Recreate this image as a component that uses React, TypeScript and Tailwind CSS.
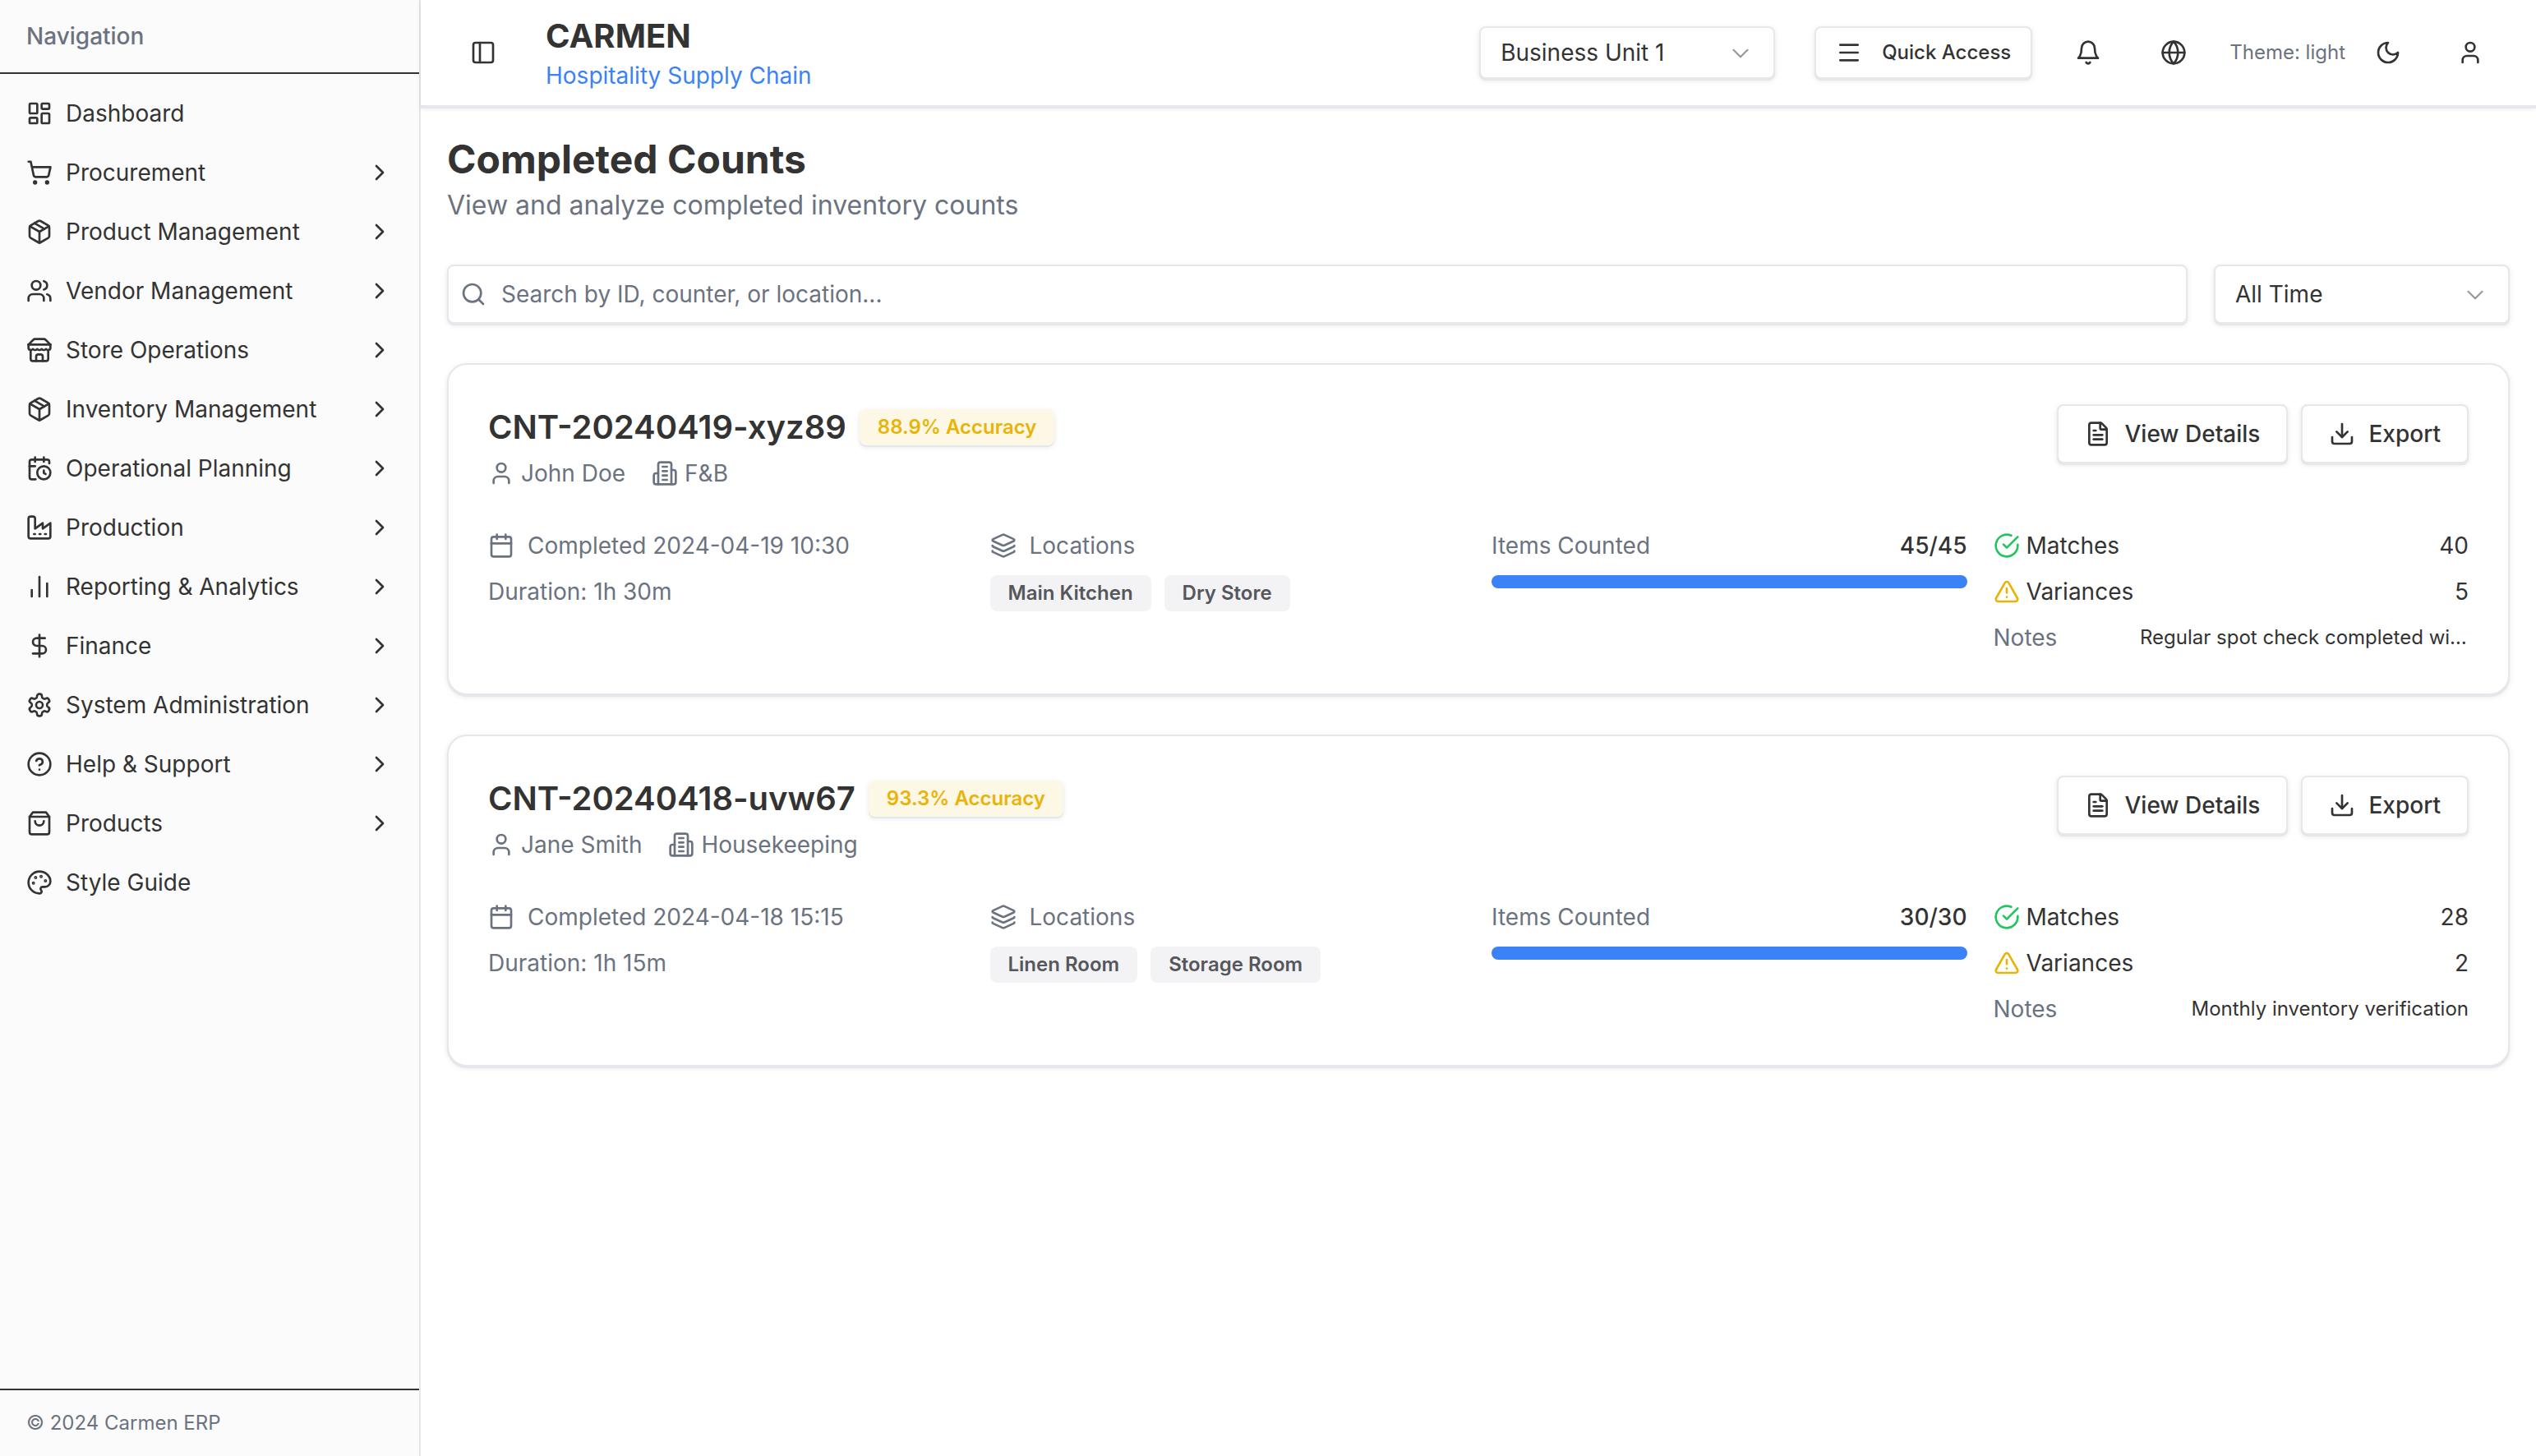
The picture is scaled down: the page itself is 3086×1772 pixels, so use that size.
import type { ComponentType, ReactNode, SVGProps } from "react";
import {
  Calendar,
  CalendarClock,
  ChartNoAxesColumn,
  ChevronRight,
  CircleQuestionMark,
  DollarSign,
  FileText,
  Globe,
  Layers,
  LayoutDashboard,
  Menu,
  Palette,
  Package,
  Search,
  ShoppingCart,
  User,
  Users,
} from "lucide-react";

type IconType = ComponentType<{ className?: string }>;

function Stroke({ children, ...rest }: SVGProps<SVGSVGElement> & { children: ReactNode }) {
  return (
    <svg
      viewBox="0 0 24 24"
      fill="none"
      stroke="currentColor"
      strokeWidth={2}
      strokeLinecap="round"
      strokeLinejoin="round"
      aria-hidden="true"
      {...rest}
    >
      {children}
    </svg>
  );
}

const BellIcon: IconType = ({ className }) => (
  <Stroke className={className}>
    <path d="M6 8a6 6 0 0 1 12 0c0 7 3 9 3 9H3s3-2 3-9" />
    <path d="M10.3 21a1.94 1.94 0 0 0 3.4 0" />
  </Stroke>
);

const MoonIcon: IconType = ({ className }) => (
  <Stroke className={className}>
    <path d="M12 3a6 6 0 0 0 9 9 9 9 0 1 1-9-9Z" />
  </Stroke>
);

const PanelIcon: IconType = ({ className }) => (
  <Stroke className={className}>
    <rect width="18" height="18" x="3" y="3" rx="2" />
    <path d="M9 3v18" />
  </Stroke>
);

const BuildingIcon: IconType = ({ className }) => (
  <Stroke className={className}>
    <path d="M6 22V4a2 2 0 0 1 2-2h8a2 2 0 0 1 2 2v18Z" />
    <path d="M6 12H4a2 2 0 0 0-2 2v6a2 2 0 0 0 2 2h2" />
    <path d="M18 9h2a2 2 0 0 1 2 2v9a2 2 0 0 1-2 2h-2" />
    <path d="M10 6h4M10 10h4M10 14h4M10 18h4" />
  </Stroke>
);

const FactoryIcon: IconType = ({ className }) => (
  <Stroke className={className}>
    <path d="M2 20a2 2 0 0 0 2 2h16a2 2 0 0 0 2-2V8l-7 5V8l-7 5V4a2 2 0 0 0-2-2H4a2 2 0 0 0-2 2Z" />
    <path d="M17 18h1M12 18h1M7 18h1" />
  </Stroke>
);

const StoreIcon: IconType = ({ className }) => (
  <Stroke className={className}>
    <path d="m2 7 4.41-4.41A2 2 0 0 1 7.83 2h8.34a2 2 0 0 1 1.42.59L22 7" />
    <path d="M4 12v8a2 2 0 0 0 2 2h12a2 2 0 0 0 2-2v-8" />
    <path d="M15 22v-4a2 2 0 0 0-2-2h-2a2 2 0 0 0-2 2v4" />
    <path d="M2 7h20" />
    <path d="M22 7v3a2 2 0 0 1-2 2a2.7 2.7 0 0 1-1.59-.63.7.7 0 0 0-.82 0A2.7 2.7 0 0 1 16 12a2.7 2.7 0 0 1-1.59-.63.7.7 0 0 0-.82 0A2.7 2.7 0 0 1 12 12a2.7 2.7 0 0 1-1.59-.63.7.7 0 0 0-.82 0A2.7 2.7 0 0 1 8 12a2.7 2.7 0 0 1-1.59-.63.7.7 0 0 0-.82 0A2.7 2.7 0 0 1 4 12a2 2 0 0 1-2-2V7" />
  </Stroke>
);

const GearIcon: IconType = ({ className }) => (
  <Stroke className={className}>
    <path d="M12.22 2h-.44a2 2 0 0 0-2 2v.18a2 2 0 0 1-1 1.73l-.43.25a2 2 0 0 1-2 0l-.15-.08a2 2 0 0 0-2.73.73l-.22.38a2 2 0 0 0 .73 2.73l.15.1a2 2 0 0 1 1 1.72v.51a2 2 0 0 1-1 1.74l-.15.09a2 2 0 0 0-.73 2.73l.22.38a2 2 0 0 0 2.73.73l.15-.08a2 2 0 0 1 2 0l.43.25a2 2 0 0 1 1 1.73V20a2 2 0 0 0 2 2h.44a2 2 0 0 0 2-2v-.18a2 2 0 0 1 1-1.73l.43-.25a2 2 0 0 1 2 0l.15.08a2 2 0 0 0 2.73-.73l.22-.39a2 2 0 0 0-.73-2.73l-.15-.08a2 2 0 0 1-1-1.74v-.5a2 2 0 0 1 1-1.74l.15-.09a2 2 0 0 0 .73-2.73l-.22-.38a2 2 0 0 0-2.73-.73l-.15.08a2 2 0 0 1-2 0l-.43-.25a2 2 0 0 1-1-1.73V4a2 2 0 0 0-2-2z" />
    <circle cx="12" cy="12" r="3" />
  </Stroke>
);

const BagIcon: IconType = ({ className }) => (
  <Stroke className={className}>
    <path d="M6 2 3 6v14a2 2 0 0 0 2 2h14a2 2 0 0 0 2-2V6l-3-4Z" />
    <path d="M3 6h18" />
    <path d="M16 10a4 4 0 0 1-8 0" />
  </Stroke>
);

const DownloadIcon: IconType = ({ className }) => (
  <Stroke className={className}>
    <path d="M21 15v4a2 2 0 0 1-2 2H5a2 2 0 0 1-2-2v-4" />
    <path d="m7 10 5 5 5-5" />
    <path d="M12 15V3" />
  </Stroke>
);

const CheckIcon: IconType = ({ className }) => (
  <Stroke className={className}>
    <path d="M22 11.08V12a10 10 0 1 1-5.93-9.14" />
    <path d="m9 11 3 3L22 4" />
  </Stroke>
);

const WarningIcon: IconType = ({ className }) => (
  <Stroke className={className}>
    <path d="m21.73 18-8-14a2 2 0 0 0-3.48 0l-8 14A2 2 0 0 0 4 21h16a2 2 0 0 0 1.73-3Z" />
    <path d="M12 9v4M12 17h.01" />
  </Stroke>
);

const NAV: { label: string; icon: IconType; leaf?: boolean }[] = [
  { label: "Dashboard", icon: LayoutDashboard, leaf: true },
  { label: "Procurement", icon: ShoppingCart },
  { label: "Product Management", icon: Package },
  { label: "Vendor Management", icon: Users },
  { label: "Store Operations", icon: StoreIcon },
  { label: "Inventory Management", icon: Package },
  { label: "Operational Planning", icon: CalendarClock },
  { label: "Production", icon: FactoryIcon },
  { label: "Reporting & Analytics", icon: ChartNoAxesColumn },
  { label: "Finance", icon: DollarSign },
  { label: "System Administration", icon: GearIcon },
  { label: "Help & Support", icon: CircleQuestionMark },
  { label: "Products", icon: BagIcon },
  { label: "Style Guide", icon: Palette, leaf: true },
];

type Count = {
  id: string;
  accuracy: string;
  counter: string;
  department: string;
  completed: string;
  duration: string;
  locations: string[];
  counted: number;
  total: number;
  matches: number;
  variances: number;
  notes: string;
};

const COUNTS: Count[] = [
  {
    id: "CNT-20240419-xyz89",
    accuracy: "88.9% Accuracy",
    counter: "John Doe",
    department: "F&B",
    completed: "2024-04-19 10:30",
    duration: "1h 30m",
    locations: ["Main Kitchen", "Dry Store"],
    counted: 45,
    total: 45,
    matches: 40,
    variances: 5,
    notes: "Regular spot check completed with minor variances",
  },
  {
    id: "CNT-20240418-uvw67",
    accuracy: "93.3% Accuracy",
    counter: "Jane Smith",
    department: "Housekeeping",
    completed: "2024-04-18 15:15",
    duration: "1h 15m",
    locations: ["Linen Room", "Storage Room"],
    counted: 30,
    total: 30,
    matches: 28,
    variances: 2,
    notes: "Monthly inventory verification",
  },
];

function Dropdown({ label, options, className }: { label: string; options: string[]; className: string }) {
  return (
    <div className={`relative w-[360px] shrink-0 ${className}`}>
      <select
        aria-label={label}
        className="h-full w-full appearance-none rounded-lg border-2 border-gray-200 bg-white px-6 text-[28px] leading-10 shadow-[0_2px_0_#e5e7eb,0_2px_6px_rgba(0,0,0,0.1)]"
      >
        {options.map((o) => (
          <option key={o}>{o}</option>
        ))}
      </select>
      <svg
        viewBox="0 0 15 15"
        className="pointer-events-none absolute inset-y-0 right-[26px] my-auto size-8 text-[#333] opacity-50"
        fill="none"
        stroke="currentColor"
        strokeLinecap="round"
        strokeLinejoin="round"
        aria-hidden="true"
      >
        <path d="m3.5 6 4 4 4-4" />
      </svg>
    </div>
  );
}

function Sidebar() {
  return (
    <aside className="flex w-[512px] shrink-0 flex-col border-r-2 border-gray-200 bg-[#fbfbfb]">
      <div className="border-b-2 border-[#333] px-8 py-6 text-[28px] leading-10 font-medium text-[#6b7280]">
        Navigation
      </div>
      <nav className="flex-1 pt-3" aria-label="Main">
        <ul>
          {NAV.map(({ label, icon: Icon, leaf }) => (
            <li key={label}>
              <a href="#" className="flex h-[72px] items-center gap-4 px-8 text-[28px] leading-10">
                <Icon className="size-8 shrink-0" />
                <span className="flex-1">{label}</span>
                {!leaf && <ChevronRight className="size-8 shrink-0" />}
              </a>
            </li>
          ))}
        </ul>
      </nav>
      <div className="border-t-2 border-[#333] px-8 py-6 text-2xl leading-8 text-[#6b7280]">© 2024 Carmen ERP</div>
    </aside>
  );
}

function IconButton({ label, icon: Icon, className }: { label: string; icon: IconType; className: string }) {
  return (
    <button type="button" aria-label={label} className={`flex items-center justify-center ${className}`}>
      <Icon className="size-8" />
    </button>
  );
}

function TopBar() {
  return (
    <header className="flex items-center justify-between border-b-2 border-gray-200 bg-white px-12 py-4 shadow-[0_2px_0_#e5e7eb,0_2px_6px_rgba(0,0,0,0.1)]">
      <div className="flex items-center gap-12">
        <IconButton label="Toggle sidebar" icon={PanelIcon} className="size-14" />
        <div>
          <div className="text-[40px] leading-14 font-bold">CARMEN</div>
          <div className="text-[28px] leading-10 text-[#3b82f6]">Hospitality Supply Chain</div>
        </div>
      </div>
      <div className="flex items-center">
        <Dropdown label="Business unit" options={["Business Unit 1"]} className="h-16" />
        <button
          type="button"
          className="ml-12 flex h-16 items-center gap-6 rounded-lg border-2 border-gray-200 bg-white px-6 text-2xl leading-8 font-medium shadow-[0_2px_0_#e5e7eb,0_2px_6px_rgba(0,0,0,0.1)]"
        >
          <Menu className="size-8" />
          Quick Access
        </button>
        <div className="ml-8 flex items-center gap-8">
          <IconButton label="Notifications" icon={BellIcon} className="size-[72px]" />
          <IconButton label="Language" icon={Globe} className="size-[72px]" />
          <div className="flex items-center gap-4">
            <span className="text-2xl leading-8 text-[#6b7280]">Theme: light</span>
            <IconButton label="Switch theme" icon={MoonIcon} className="size-[72px]" />
          </div>
          <IconButton label="Account" icon={User} className="size-16" />
        </div>
      </div>
    </header>
  );
}

function ActionButton({ icon: Icon, children }: { icon: IconType; children: ReactNode }) {
  return (
    <button
      type="button"
      className="flex h-[72px] items-center gap-4 rounded-lg border-2 border-gray-200 bg-white px-8 text-[28px] leading-10 font-medium shadow-[0_2px_0_#e5e7eb,0_2px_6px_rgba(0,0,0,0.1)]"
    >
      <Icon className="size-8" />
      {children}
    </button>
  );
}

function CountCard({ count }: { count: Count }) {
  return (
    <article className="rounded-3xl border-2 border-gray-200 bg-white p-12 shadow-[0_2px_0_#e5e7eb,0_2px_6px_rgba(0,0,0,0.1)]">
      <div className="flex items-start justify-between">
        <div className="flex flex-col gap-2">
          <div className="flex items-center gap-4">
            <h2 className="text-[40px] leading-14 font-semibold">{count.id}</h2>
            <span className="flex h-11 items-center rounded-lg bg-[#fdf7e6] px-[22px] text-2xl leading-8 font-semibold text-[#eab308] shadow-[0_2px_0_#e5e7eb,0_2px_6px_rgba(0,0,0,0.1)]">
              {count.accuracy}
            </span>
          </div>
          <div className="flex items-center gap-8 text-[28px] leading-10 text-[#6b7280]">
            <span className="flex items-center gap-2">
              <User className="size-8" />
              {count.counter}
            </span>
            <span className="flex items-center gap-2">
              <BuildingIcon className="size-8" />
              {count.department}
            </span>
          </div>
        </div>
        <div className="flex gap-4">
          <ActionButton icon={FileText}>View Details</ActionButton>
          <ActionButton icon={DownloadIcon}>Export</ActionButton>
        </div>
      </div>

      <div className="mt-12 grid grid-cols-4 gap-8 text-[28px] leading-10">
        <div className="flex flex-col gap-4 text-[#6b7280]">
          <div className="flex items-center gap-4">
            <Calendar className="size-8" />
            Completed {count.completed}
          </div>
          <div>Duration: {count.duration}</div>
        </div>

        <div className="flex flex-col gap-4">
          <div className="flex items-center gap-4 text-[#6b7280]">
            <Layers className="size-8" />
            Locations
          </div>
          <div className="flex gap-4">
            {count.locations.map((l) => (
              <span
                key={l}
                className="flex h-11 items-center rounded-lg bg-[#f3f3f5] px-[22px] text-2xl leading-8 font-semibold text-[#55575c]"
              >
                {l}
              </span>
            ))}
          </div>
        </div>

        <div className="flex flex-col gap-4">
          <div className="flex justify-between">
            <span className="text-[#6b7280]">Items Counted</span>
            <span className="font-medium">
              {count.counted}/{count.total}
            </span>
          </div>
          <div
            role="progressbar"
            aria-label="Items counted"
            aria-valuenow={count.counted}
            aria-valuemax={count.total}
            className="h-4 overflow-hidden rounded-full bg-[#3b82f6]/20"
          >
            <div className="h-full bg-[#3b82f6]" style={{ width: `${(count.counted / count.total) * 100}%` }} />
          </div>
        </div>

        <dl className="flex flex-col gap-4">
          <div className="flex justify-between">
            <dt className="flex items-center gap-2">
              <CheckIcon className="size-8 text-[#22c55e]" />
              Matches
            </dt>
            <dd>{count.matches}</dd>
          </div>
          <div className="flex justify-between">
            <dt className="flex items-center gap-2">
              <WarningIcon className="size-8 text-[#eab308]" />
              Variances
            </dt>
            <dd>{count.variances}</dd>
          </div>
          <div className="flex items-center justify-between">
            <dt className="text-[#6b7280]">Notes</dt>
            <dd className="max-w-[400px] truncate text-2xl leading-8">{count.notes}</dd>
          </div>
        </dl>
      </div>
    </article>
  );
}

export default function App() {
  return (
    <div className="flex min-h-screen bg-white font-[Inter,sans-serif] text-[#333] antialiased">
      <Sidebar />
      <div className="flex min-w-0 flex-1 flex-col">
        <TopBar />
        <main className="flex flex-col gap-12 p-8">
          <div>
            <h1 className="text-5xl leading-16 font-bold">Completed Counts</h1>
            <p className="text-[32px] leading-12 text-[#6b7280]">View and analyze completed inventory counts</p>
          </div>
          <div className="flex gap-8">
            <div className="relative h-[72px] flex-1">
              <Search className="pointer-events-none absolute inset-y-0 left-4 my-auto size-8 text-[#6b7280]" />
              <input
                type="search"
                aria-label="Search counts"
                placeholder="Search by ID, counter, or location..."
                className="h-full w-full rounded-lg border-2 border-gray-200 bg-transparent pr-6 pl-16 text-[28px] leading-10 shadow-[0_2px_0_#e5e7eb,0_2px_6px_rgba(0,0,0,0.1)] placeholder:text-[#6b7280]"
              />
            </div>
            <Dropdown label="Period" options={["All Time"]} className="h-[72px]" />
          </div>
          {COUNTS.map((c) => (
            <CountCard key={c.id} count={c} />
          ))}
        </main>
      </div>
    </div>
  );
}
